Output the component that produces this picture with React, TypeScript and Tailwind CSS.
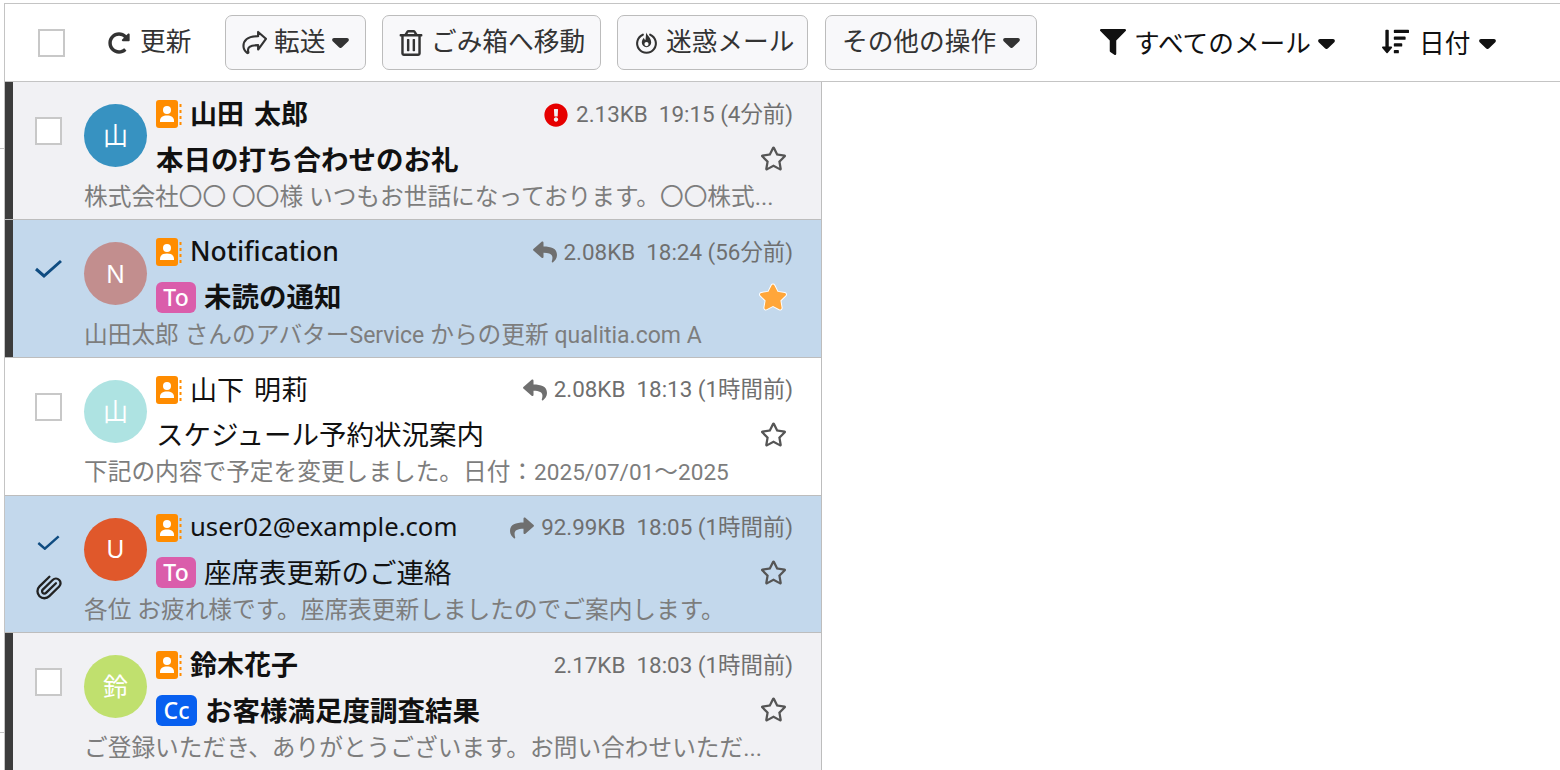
import type { ReactNode } from 'react';
import {
  FaExclamationCircle,
  FaFilter,
  FaRedoAlt,
  FaRegStar,
  FaRegTrashAlt,
  FaReply,
  FaShare,
  FaSortAmountDown,
  FaStar,
} from 'react-icons/fa';
import { Paperclip } from 'lucide-react';

const Caret = ({ className = 'text-[#333]' }: { className?: string }) => (
  <svg viewBox="0 0 17 10" className={`w-[17px] h-[10px] shrink-0 ${className}`} fill="currentColor">
    <path d="M2 0h13c1.700 0 2.500 2 1.300 3.200L9.800 9.500c-.7.7-1.900.7-2.600 0L.7 3.200C-.5 2 .3 0 2 0z" />
  </svg>
);

const ShareOutline = () => (
  <svg viewBox="0 0 512 512" className="w-[25px] h-[25px] text-[#333]" fill="none" stroke="currentColor" strokeWidth="44" strokeLinejoin="round">
    <path d="M490 180 330 40v86C180 128 30 160 30 330c0 62 35 110 75 140 14 10 30-2 25-18-30-100 30-140 200-142v90z" />
  </svg>
);

const SpamIcon = () => (
  <svg viewBox="0 0 24 24" className="w-[25px] h-[25px] text-[#333]" fill="none">
    <path d="M8.500 4.500a9 9 0 1 0 7 0" stroke="currentColor" strokeWidth="2" strokeLinecap="round" />
    <path d="M12 2.500c.5 3 4.500 5 4.500 9.500a4.500 4.500 0 0 1-9 0c0-2 1-3.500 2-4.500.3 1.500 1 2 1.500 2 .5-2 .2-5 1-7z" fill="currentColor" />
    <circle cx="12" cy="13.500" r="2" fill="white" />
  </svg>
);

const ContactIcon = () => (
  <svg viewBox="0 0 26 28" className="w-[26px] h-[28px] shrink-0">
    <rect x="0" y="0" width="22" height="28" rx="3" fill="#ff8c00" />
    <circle cx="11" cy="10" r="4" fill="white" />
    <path d="M4 21c0-4 3-5.500 7-5.500s7 1.500 7 5.500v1H4z" fill="white" />
    <path d="M24.500 4v3M24.500 10v3M24.500 16v3M24.500 22v3" stroke="#ff8c00" strokeWidth="2" />
  </svg>
);

const Checkbox = () => <div className="w-[27px] h-[28px] bg-white border-2 border-[#c8c8c8]" />;

const ToolButton = ({ icon, label, caret, width }: { icon: ReactNode; label: string; caret?: boolean; width: string }) => (
  <button className={`h-[55px] pl-[16px] flex items-center gap-[7px] bg-[#f8f8fa] border border-[#bcbcbc] rounded-[7px] text-[25.700px] text-[#333] ${width}`}>
    {icon}
    <span>{label}</span>
    {caret && <Caret />}
  </button>
);

type Mail = {
  id: number;
  initial: string;
  avatar: string;
  sender: string;
  senderClass: string;
  subject: string;
  preview: ReactNode;
  meta: string;
  tag?: 'To' | 'Cc';
  unread?: boolean;
  selected?: boolean;
  starred?: boolean;
  status?: 'important' | 'reply' | 'forward';
  attached?: boolean;
};

const MAILS: Mail[] = [
  {
    id: 1,
    initial: '山',
    avatar: 'bg-[#3792c1]',
    sender: '山田 太郎',
    senderClass: 'text-[27px] font-bold [word-spacing:3px]',
    subject: '本日の打ち合わせのお礼',
    preview: '株式会社〇〇 〇〇様 いつもお世話になっております。〇〇株式...',
    meta: '2.13KB  19:15 (4分前)',
    unread: true,
    status: 'important',
  },
  {
    id: 2,
    initial: 'N',
    avatar: 'bg-[#c28e8e]',
    sender: 'Notification',
    senderClass: 'text-[26.500px] font-medium',
    subject: '未読の通知',
    preview: (
      <>
        山田太郎 さんのアバター<span className="text-[23px]">Service</span> からの更新 <span className="text-[23px]">qualitia.com A</span>
      </>
    ),
    meta: '2.08KB  18:24 (56分前)',
    tag: 'To',
    unread: true,
    selected: true,
    starred: true,
    status: 'reply',
  },
  {
    id: 3,
    initial: '山',
    avatar: 'bg-[#aee3e2]',
    sender: '山下 明莉',
    senderClass: 'text-[27px] font-normal [word-spacing:3px]',
    subject: 'スケジュール予約状況案内',
    preview: (
      <>
        下記の内容で予定を変更しました。日付：<span className="text-[22.600px]">2025/07/01</span>～<span className="text-[22.600px]">2025</span>
      </>
    ),
    meta: '2.08KB  18:13 (1時間前)',
    status: 'reply',
  },
  {
    id: 4,
    initial: 'U',
    avatar: 'bg-[#e0582b]',
    sender: 'user02@example.com',
    senderClass: 'text-[25.700px] font-normal',
    subject: '座席表更新のご連絡',
    preview: '各位 お疲れ様です。座席表更新しましたのでご案内します。',
    meta: '92.99KB  18:05 (1時間前)',
    tag: 'To',
    selected: true,
    status: 'forward',
    attached: true,
  },
  {
    id: 5,
    initial: '鈴',
    avatar: 'bg-[#c0e06e]',
    sender: '鈴木花子',
    senderClass: 'text-[27px] font-bold',
    subject: 'お客様満足度調査結果',
    preview: 'ご登録いただき、ありがとうございます。お問い合わせいただ...',
    meta: '2.17KB  18:03 (1時間前)',
    tag: 'Cc',
    unread: true,
  },
];

const StatusIcon = ({ status }: { status: Mail['status'] }) => {
  if (status === 'important') return <FaExclamationCircle className="text-[24px] text-[#e60000] mr-[8px]" />;
  if (status === 'reply') return <FaReply className="text-[24px] text-[#6f6f6f] mr-[7px]" />;
  if (status === 'forward') return <FaShare className="text-[24px] text-[#6f6f6f] mr-[7px]" />;
  return null;
};

const MailRow = ({ mail }: { mail: Mail }) => {
  const bg = mail.selected ? 'bg-[#c3d8ec]' : mail.unread ? 'bg-[#f1f1f4]' : 'bg-white';
  return (
    <div className={`h-[137.750px] flex border-b border-[#bdbdbd] overflow-hidden ${bg}`}>
      <div className={`w-[8px] shrink-0 ${mail.unread ? 'bg-[#3c3c3c]' : ''}`} />
      <div className="flex-1 min-w-0 pl-[22px] pr-[28px]">
        <div className="flex h-[106px]">
          <div className="w-[49px] shrink-0 pt-[35px] flex flex-col">
            {mail.selected ? (
              <svg viewBox="0 0 27 20" className="w-[27px] h-[20px] mt-[3px]" fill="none" stroke="#0f4c81" strokeWidth="3">
                <path d="M1 11l8 7L26 3" />
              </svg>
            ) : (
              <Checkbox />
            )}
            {mail.attached && <Paperclip className="w-[34px] h-[34px] mt-[24px] -ml-[3px] text-[#222] -scale-x-100 rotate-90" strokeWidth={2} />}
          </div>
          <div className={`w-[63px] h-[63px] mt-[22px] shrink-0 rounded-full flex items-center justify-center text-white text-[25px] ${mail.avatar}`}>
            {mail.initial}
          </div>
          <div className="flex-1 min-w-0 ml-[9px] pt-[14px]">
            <div className="flex items-center h-[36px]">
              <ContactIcon />
              <span className={`ml-[8px] text-[#111] ${mail.senderClass}`}>{mail.sender}</span>
              <span className="ml-auto mt-[1px] flex items-center text-[22.400px] text-[#6f6f6f] whitespace-pre font-['Roboto','Noto_Sans_CJK_JP',sans-serif]">
                <StatusIcon status={mail.status} />
                {mail.meta}
              </span>
            </div>
            <div className="flex items-center h-[40px] mt-[7px]">
              {mail.tag && (
                <span className={`h-[31px] rounded-[6px] flex items-center justify-center text-white text-[23px] font-medium mr-[8px] ${mail.tag === 'To' ? 'w-[40px] bg-[#da5dab]' : 'w-[41px] bg-[#0860f0]'}`}>
                  {mail.tag}
                </span>
              )}
              <span className={`text-[27.500px] text-[#111] ${mail.unread ? 'font-bold' : 'font-normal'}`}>{mail.subject}</span>
              <span className="ml-auto mr-[6px] -mt-[1px]">
                {mail.starred ? (
                  <FaStar className="text-[28px] text-[#ffa63a] stroke-white [stroke-width:40px] [paint-order:stroke]" />
                ) : (
                  <FaRegStar className="text-[27px] text-[#555]" />
                )}
              </span>
            </div>
          </div>
        </div>
        <div className="h-[31px] -mt-[6px] ml-[49px] flex items-center text-[23.700px] text-[#7d7d7d] whitespace-pre overflow-hidden font-['Roboto','Noto_Sans_CJK_JP',sans-serif]">
          <span>{mail.preview}</span>
        </div>
      </div>
    </div>
  );
};

export default function App() {
  return (
    <div className="w-[1560px] h-[770px] flex overflow-hidden bg-white font-['Noto_Sans','Noto_Sans_CJK_JP',sans-serif]">
      <div className="w-[4px] shrink-0 flex flex-col">
        <div className="h-px mt-[148px] bg-[#c4c4c4]" />
        <div className="h-px mt-[583px] bg-[#c4c4c4]" />
      </div>
      <div className="flex-1 min-w-0 mt-[3px] border-t border-l border-[#c4c4c4] flex flex-col">
        <div className="h-[78.250px] shrink-0 flex items-center border-b border-[#c4c4c4]">
          <div className="ml-[33px] w-[27px]">
            <Checkbox />
          </div>
          <div className="ml-[43px] flex items-center gap-[10px] text-[25.700px] text-[#333] w-[117px]">
            <FaRedoAlt className="text-[22px]" />
            <span>更新</span>
          </div>
          <div className="flex items-center">
            <ToolButton width="w-[141px]" icon={<ShareOutline />} label="転送" caret />
            <div className="ml-[16px]">
              <ToolButton width="w-[219px]" icon={<FaRegTrashAlt className="text-[26px] -ml-[1px]" />} label="ごみ箱へ移動" />
            </div>
            <div className="ml-[16px]">
              <ToolButton width="w-[191px]" icon={<SpamIcon />} label="迷惑メール" />
            </div>
            <div className="ml-[17px]">
              <ToolButton width="w-[212px]" icon={<></>} label="その他の操作" caret />
            </div>
          </div>
          <div className="ml-[63px] flex items-center text-[25.700px] text-[#111] pt-[3px]">
            <FaFilter className="text-[26px] mr-[8px] -mt-[5px]" />
            <span>すべてのメール</span>
            <Caret className="ml-[7px] text-[#111]" />
          </div>
          <div className="ml-[47px] flex items-center text-[25.700px] text-[#111] pt-[3px]">
            <FaSortAmountDown className="text-[27px] mr-[10px] -mt-[5px]" />
            <span>日付</span>
            <Caret className="ml-[9px] text-[#111]" />
          </div>
        </div>
        <div className="w-[817px] flex-1 border-r border-[#bdbdbd]">
          {MAILS.map((m) => (
            <MailRow key={m.id} mail={m} />
          ))}
        </div>
      </div>
    </div>
  );
}
